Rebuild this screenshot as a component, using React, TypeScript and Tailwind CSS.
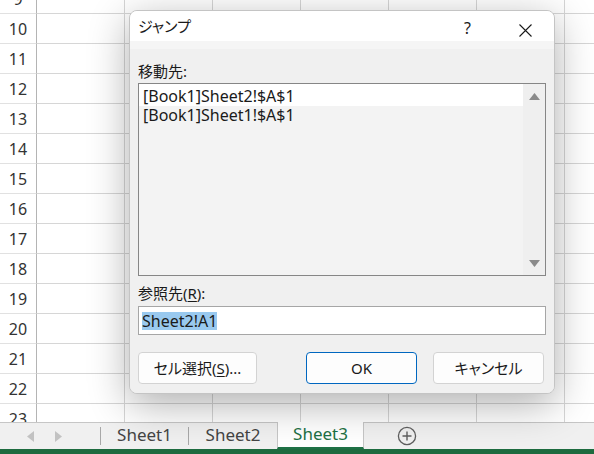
const rows = [9, 10, 11, 12, 13, 14, 15, 16, 17, 18, 19, 20, 21, 22, 23];
const cols = [0, 1, 2, 3, 4, 5, 6];

const ui = "font-['Noto_Sans','Noto_Sans_CJK_JP',sans-serif]";

function Grid() {
  return (
    <div className="h-[422px] overflow-hidden bg-white">
      <div className="-mt-[16px]">
        {rows.map((r) => (
          <div key={r} className="flex h-[30px]">
            <div className="flex w-[37px] shrink-0 items-center justify-center border-b border-r border-b-[#e1e1e1] border-r-[#b4b4b4] text-[16px] text-[#333]">
              {r}
            </div>
            {cols.map((c) => (
              <div key={c} className="w-[88px] shrink-0 border-b border-r border-[#d6d6d6]" />
            ))}
          </div>
        ))}
      </div>
    </div>
  );
}

function Button({ children, primary, className }: { children: React.ReactNode; primary?: boolean; className?: string }) {
  return (
    <div
      className={`flex h-[32px] items-center justify-center rounded-[4px] bg-[#fdfdfd] text-[15px] text-[#1a1a1a] [font-feature-settings:'palt'] ${
        primary ? 'border border-[#0067c0]' : 'border border-[#d3d3d3]'
      } ${className ?? ''}`}
    >
      {children}
    </div>
  );
}

function Dialog() {
  return (
    <div className="absolute left-[129px] top-[10px] flex h-[384px] w-[426px] flex-col overflow-hidden rounded-[8px] border border-[#c4c4c4] bg-[#f0f0f0] shadow-[0_10px_40px_rgba(0,0,0,0.32)]">
      <div className="relative flex h-[30px] items-center bg-white pl-[8px] text-[15px] text-[#1a1a1a] [font-feature-settings:'palt']">
        ジャンプ
        <span className="absolute left-[334px] top-[5px] text-[16px]">?</span>
        <svg className="absolute left-[389px] top-[13px]" width="13" height="13" viewBox="0 0 13 13">
          <path d="M0.5 0.5 L12.5 12.5 M12.5 0.5 L0.5 12.5" stroke="#1a1a1a" strokeWidth="1.1" />
        </svg>
      </div>
      <div className="flex flex-1 flex-col bg-[linear-gradient(#f5f5f5_0,#f5f5f5_8px,#f0f0f0_8px)] px-[8px] pt-[20px]">
        <div className="h-[20px] text-[15px] leading-[20px] text-[#1a1a1a]">移動先:</div>
        <div className="mt-[2px] flex h-[193px] border border-[#868686] bg-[#f3f3f3]">
          <div className="flex-1 text-[16px] leading-[18px] text-[#1a1a1a]">
            <div className="h-[22px] bg-white pl-[4px] pt-[3px]">[Book1]Sheet2!$A$1</div>
            <div className="pl-[4px]">[Book1]Sheet1!$A$1</div>
          </div>
          <div className="flex w-[22px] flex-col items-center justify-between bg-[#efefef] pb-[8px] pt-[9px]">
            <svg width="11" height="7" viewBox="0 0 11 7">
              <path d="M5.5 0 L11 7 L0 7 Z" fill="#8a8a8a" />
            </svg>
            <svg width="11" height="7" viewBox="0 0 11 7">
              <path d="M0 0 L11 0 L5.5 7 Z" fill="#8a8a8a" />
            </svg>
          </div>
        </div>
        <div className="mt-[7px] h-[20px] text-[15px] leading-[20px] text-[#1a1a1a]">
          参照先(<span className="underline underline-offset-2">R</span>):
        </div>
        <div className="mt-[3px] flex h-[29px] items-center border border-[#a6a6a6] bg-white pl-[3px]">
          <span className="bg-[#99c9ef] text-[16px] leading-[18px] text-[#1a1a1a]">Sheet2!A1</span>
        </div>
        <div className="mt-[17px] flex">
          <Button className="w-[119px]">
            セル選択(<span className="underline underline-offset-2">S</span>)...
          </Button>
          <div className="ml-auto mr-[2px] flex gap-[16px]">
            <Button primary className="w-[111px]">OK</Button>
            <Button className="w-[111px]">キャンセル</Button>
          </div>
        </div>
      </div>
    </div>
  );
}

function TabBar() {
  return (
    <div className="flex h-[27px] border-t border-[#c6c6c6] bg-[#f0f0f0] text-[17px] text-[#444]">
      <div className="flex w-[100px] items-center">
        <svg className="ml-[27px]" width="7" height="11" viewBox="0 0 7 11">
          <path d="M7 0 L0 5.5 L7 11 Z" fill="#c2c2c2" />
        </svg>
        <svg className="ml-[21px]" width="7" height="11" viewBox="0 0 7 11">
          <path d="M0 0 L7 5.5 L0 11 Z" fill="#c2c2c2" />
        </svg>
      </div>
      <div className="my-[4px] w-px bg-[#a8a8a8]" />
      <div className="flex w-[87px] items-center justify-center pb-[2px]">Sheet1</div>
      <div className="my-[4px] w-px bg-[#a8a8a8]" />
      <div className="flex w-[88px] items-center justify-center pb-[2px]">Sheet2</div>
      <div className="-mt-px flex w-[87px] items-center justify-center border-x border-b-2 border-x-[#c6c6c6] border-b-[#1e7145] bg-white pb-[1px] text-[#1e7145]">
        Sheet3
      </div>
      <div className="flex items-center pl-[33px]">
        <svg width="20" height="20" viewBox="0 0 20 20">
          <circle cx="10" cy="10" r="8.6" fill="none" stroke="#5f5f5f" strokeWidth="1.3" />
          <path d="M10 5.5 V14.5 M5.5 10 H14.5" stroke="#5f5f5f" strokeWidth="1.4" />
        </svg>
      </div>
    </div>
  );
}

export default function App() {
  return (
    <div className={`relative h-[454px] w-[594px] overflow-hidden bg-white ${ui}`}>
      <Grid />
      <TabBar />
      <div className="h-[5px] bg-[#1d6b3f]" />
      <Dialog />
    </div>
  );
}
